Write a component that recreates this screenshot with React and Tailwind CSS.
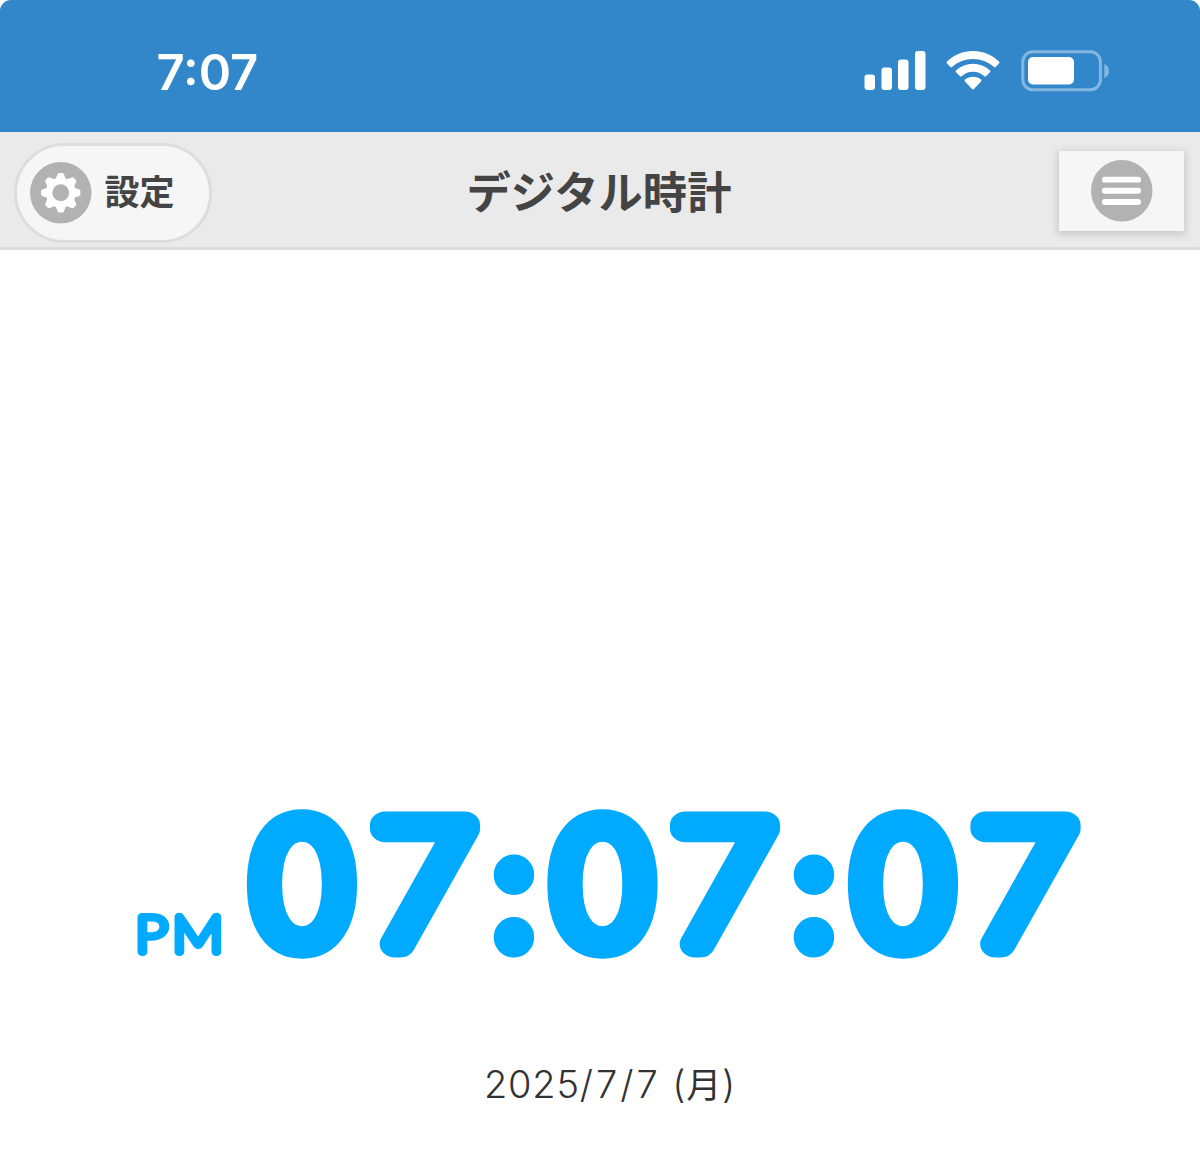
import React from "react";

const STATUS_TIME = "7:07";

// centre x of each character on the clock face
const CLOCK_CHARS = [
    { char: "0", x: 302 },
    { char: "7", x: 425 },
    { char: ":", x: 514 },
    { char: "0", x: 602.5 },
    { char: "7", x: 725 },
    { char: ":", x: 814 },
    { char: "0", x: 903 },
    { char: "7", x: 1025.5 },
];

// the face is drawn with thin glyphs and a thick round outline
const CHAR_STYLE = {
    "0": { size: 165.5, weight: 200, outline: 25.5, stretch: 1.07 },
    "7": { size: 163, weight: 100, outline: 27, stretch: 1.15 },
    ":": { size: 163, weight: 500, outline: 17, stretch: 1 },
};

const GEAR_ANGLES = [ 0, 45, 90, 135, 180, 225, 270, 315 ];

const SignalIcon = () => (
    <svg className="w-[62px] h-10" viewBox="0 0 62 40" fill="white">
        <rect x="0.5" y="24.5" width="10.5" height="15.5" rx="3" />
        <rect x="17.5" y="17.5" width="10.5" height="22.5" rx="3" />
        <rect x="34" y="9.5" width="10.5" height="30.5" rx="3" />
        <rect x="51" y="1" width="10.5" height="39" rx="3" />
    </svg>
);

const WifiIcon = () => (
    <svg className="w-[54px] h-10" viewBox="0 0 54 40" fill="white">
        <path d="M27 1C37 1 46 5 53 11.5Q54 12.6 53 13.6L49.8 16.8Q48.8 17.8 47.7 16.8C42 11.8 35 8.9 27 8.9S12 11.8 6.3 16.8Q5.2 17.8 4.2 16.8L1 13.6Q0 12.6 1 11.5C8 5 17 1 27 1Z" />
        <path d="M27 13.8C33.5 13.8 39.2 16.2 43.9 20.2Q45 21.2 44 22.2L40.2 26Q39.3 27 38.1 26C35 23.3 31.2 21.8 27 21.8S19 23.3 15.9 26Q14.7 27 13.8 26L10 22.2Q9 21.2 10.1 20.2C14.8 16.2 20.5 13.8 27 13.8Z" />
        <path d="M27 26.8C30 26.8 32.6 27.8 34.9 29.4Q36 30.3 35 31.5L28.2 38.8Q27 40 25.8 38.8L19 31.5Q18 30.3 19.1 29.4C21.4 27.8 24 26.8 27 26.8Z" />
    </svg>
);

const BatteryIcon = () => (
    <svg className="w-[88px] h-[42px]" viewBox="0 0 88 42">
        <rect x="1.8" y="1.8" width="77.6" height="38" rx="10" fill="none" stroke="white" strokeOpacity="0.4" strokeWidth="3" />
        <rect x="7" y="7" width="46" height="27.5" rx="5" fill="white" />
        <path d="M83.3 14C86 15 88 17.5 88 21S86 27 83.3 28Z" fill="white" fillOpacity="0.4" />
    </svg>
);

const GearIcon = () => (
    <svg className="w-[61.5px] h-[61.5px] overflow-visible" viewBox="-31 -31 62 62">
        <circle r="31" fill="#b2b2b2" />
        { GEAR_ANGLES.map( ( angle ) => (
            <path
                key={ angle }
                transform={ `rotate(${ angle })` }
                d="M-5.4 -13L-3.2 -18.6Q-2.8 -19.8 -1.8 -19.8H1.8Q2.8 -19.8 3.2 -18.6L5.4 -13Z"
                fill="white"
            />
        ) ) }
        <circle r="11.8" fill="none" stroke="white" strokeWidth="6.6" />
    </svg>
);

const MenuIcon = () => (
    <svg className="w-[61.5px] h-[61.5px] overflow-visible" viewBox="0 0 62 62">
        <circle cx="31" cy="31" r="31" fill="#b2b2b2" />
        <rect x="11" y="16.8" width="39.5" height="6" rx="3" fill="white" />
        <rect x="11" y="28" width="39.5" height="6" rx="3" fill="white" />
        <rect x="11" y="39.3" width="39.5" height="6" rx="3" fill="white" />
    </svg>
);

const StatusBar = () => (
    <div className="h-[132px] bg-[#3287ca] rounded-t-[11px] flex items-start justify-between pl-[156.5px] pr-[91px]">
        <span className="mt-[42px] text-[49px] leading-[62px] font-semibold text-white font-['Inter',sans-serif] [font-feature-settings:'case'_1,'calt'_1]">
            { STATUS_TIME }
        </span>
        <div className="mt-[50px] flex items-start">
            <SignalIcon />
            <div className="ml-[20px]"><WifiIcon /></div>
            <div className="ml-[21px]"><BatteryIcon /></div>
        </div>
    </div>
);

const Header = () => (
    <header className="h-[118px] bg-[#eaeaea] border-b-3 border-[#dddddd] grid grid-cols-[1fr_auto_1fr] items-start text-[#444444] font-['Noto_Sans_CJK_JP',sans-serif]">
        <button className="mt-[11px] ml-[14px] w-[198px] h-[100px] rounded-full border-3 border-[#dddddd] bg-[#f6f6f6] flex items-center pl-[13px] gap-[13px] pb-px">
            <GearIcon />
            <span className="-mt-[5px] text-[35px] leading-[50px] font-bold">設定</span>
        </button>
        <h1 className="mt-[28px] mr-[2px] text-[44.3px] leading-[60px] font-bold">デジタル時計</h1>
        <button className="justify-self-end mt-[19px] mr-4 w-[125px] h-[80px] bg-[#f6f6f6] shadow-[0_2px_7px_2px_rgba(0,0,0,0.13)] flex items-center justify-center pb-px">
            <MenuIcon />
        </button>
    </header>
);

const ClockChar = ( { char, x } ) =>
{
    const { size, weight, outline, stretch } = CHAR_STYLE[ char ];
    const baseline = char === ":" ? 197.5 : 193.5;

    return (
        <text
            transform={ `translate(${ x } ${ baseline }) scale(${ stretch } 1)` }
            fontSize={ size }
            fontWeight={ weight }
            strokeWidth={ outline }
        >
            { char }
        </text>
    );
};

const Clock = () => (
    <svg className="block w-[1200px] h-[260px]" viewBox="0 0 1200 260" role="img">
        <g
            className="font-['Inter',sans-serif]"
            fill="#00aaff"
            stroke="#00aaff"
            strokeLinejoin="round"
            textAnchor="middle"
        >
            <text
                className="font-['Lato',sans-serif]"
                transform="translate(182 202) scale(1.14 1)"
                fontSize="50"
                fontWeight="100"
                strokeWidth="8"
                letterSpacing="4.5"
            >
                PM
            </text>
            { CLOCK_CHARS.map( ( { char, x } ) => (
                <ClockChar key={ x } char={ char } x={ x } />
            ) ) }
        </g>
    </svg>
);

const App = () =>
{
    return (
        <div className="w-[1200px] h-[1162px] bg-white flex flex-col overflow-hidden">
            <StatusBar />
            <Header />
            <main className="flex-1 pt-[500px]">
                <Clock />
                <p className="mt-[47px] ml-[20px] text-center text-[38px] leading-[54px] tracking-[0.8px] text-[#333333] font-light font-['Inter','Noto_Sans_CJK_JP',sans-serif]">
                    2025<span className="tracking-[3px]">/7/7</span> (<span className="font-normal text-[35px]">月</span>)
                </p>
            </main>
        </div>
    );
};

export default App;
